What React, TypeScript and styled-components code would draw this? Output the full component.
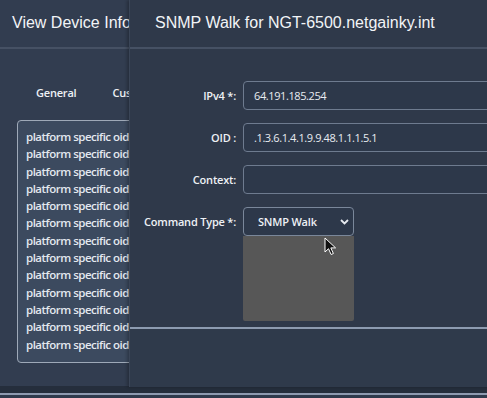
import styled, { createGlobalStyle } from "styled-components";

const GlobalStyle = createGlobalStyle`
  html, body {
    margin: 0;
    padding: 0;
    background: #2f3a4c;
    overflow: hidden;
  }
  #root {
    height: 398px;
  }
`;

const oidLines = Array.from({ length: 13 }, () => "platform specific oid");

const fields = [
  { label: "IPv4 *:", value: "64.191.185.254" },
  { label: "OID :", value: ".1.3.6.1.4.1.9.9.48.1.1.1.5.1" },
  { label: "Context:", value: "" },
];

export default function App() {
  return (
    <>
      <GlobalStyle />
      <Screen>
        <DeviceModal>
          <ModalHeader>
            <Title>View Device Info</Title>
          </ModalHeader>
          <Tabs>
            <Tab>General</Tab>
            <Tab>Custom</Tab>
          </Tabs>
          <OidBox>
            {oidLines.map((line, i) => (
              <OidLine key={i}>{line}</OidLine>
            ))}
          </OidBox>
        </DeviceModal>
        <BottomEdge />

        <WalkModal>
          <ModalHeader>
            <Title $front>SNMP Walk for NGT-6500.netgainky.int</Title>
          </ModalHeader>
          <Form>
            {fields.map((f) => (
              <FieldRow key={f.label}>
                <Label>{f.label}</Label>
                <Input>{f.value}</Input>
              </FieldRow>
            ))}
            <FieldRow>
              <Label>Command Type *:</Label>
              <SelectWrap>
                <Select>
                  <span>SNMP Walk</span>
                  <svg width="9" height="6" viewBox="0 0 9 6">
                    <path
                      d="M1 1l3.5 3.5L8 1"
                      stroke="#e6eaf0"
                      strokeWidth="1.8"
                      fill="none"
                    />
                  </svg>
                </Select>
                <DropList />
                <Cursor width="13" height="19" viewBox="0 0 13 19">
                  <path
                    d="M1 1v14l3.5-3.3 2.6 5.8 2.3-1-2.6-5.6H11.6z"
                    fill="#111"
                    stroke="#fff"
                    strokeWidth="1"
                  />
                </Cursor>
              </SelectWrap>
            </FieldRow>
          </Form>
          <Footer />
        </WalkModal>
      </Screen>
    </>
  );
}

const Screen = styled.div`
  position: relative;
  width: 487px;
  height: 398px;
  overflow: hidden;
  background: #2f3a4c;
  font-family: "Open Sans", "Liberation Sans", sans-serif;
`;

const DeviceModal = styled.div`
  height: 386px;
  background: #323d50;
  display: flex;
  flex-direction: column;
`;

const ModalHeader = styled.div`
  height: 47px;
  display: flex;
  align-items: center;
  border-bottom: 2px solid #465164;
  flex-shrink: 0;
`;

const Title = styled.h1<{ $front?: boolean }>`
  margin: 0;
  padding-left: ${(p) => (p.$front ? "25px" : "12px")};
  padding-bottom: 2px;
  font-family: "Liberation Sans", Arial, sans-serif;
  font-size: 16px;
  font-weight: 400;
  color: #f2f4f7;
  white-space: nowrap;
`;

const Tabs = styled.div`
  display: flex;
  gap: 36px;
  padding: 36px 0 0 36px;
  height: 35px;
`;

const Tab = styled.span`
  font-size: 11px;
  font-weight: 600;
  color: #eef1f5;
  letter-spacing: -0.2px;
`;

const OidBox = styled.div`
  margin: 0 0 0 17px;
  width: 150px;
  height: 243px;
  border: 1px solid #9ea9b8;
  border-radius: 4px;
  background: #3c4a5f;
  padding: 7px 0 0 8px;
  box-sizing: border-box;
  display: flex;
  flex-direction: column;
`;

const OidLine = styled.div`
  font-size: 11.5px;
  font-weight: 600;
  line-height: 17.3px;
  color: #e3e8ef;
  letter-spacing: -0.5px;
  white-space: nowrap;
`;

const BottomEdge = styled.div`
  height: 7px;
  background: #252e3c;
  border-bottom: 2px solid #8e9ab0;
`;

const WalkModal = styled.div`
  position: absolute;
  left: 129px;
  top: 0;
  width: 380px;
  height: 387px;
  background: #2f394a;
  box-shadow: -2px 0 3px rgba(0, 0, 0, 0.25);
  border-left: 1px solid #3a4557;
  display: flex;
  flex-direction: column;
`;

const Form = styled.div`
  display: flex;
  flex-direction: column;
  gap: 13px;
  padding-top: 32px;
  height: 246px;
  box-sizing: border-box;
  flex-shrink: 0;
`;

const FieldRow = styled.div`
  display: flex;
  align-items: center;
  gap: 7px;
  height: 29px;
`;

const Label = styled.label`
  width: 106px;
  text-align: right;
  font-size: 11px;
  font-weight: 600;
  color: #eef1f5;
  letter-spacing: -0.2px;
  white-space: nowrap;
`;

const Input = styled.div`
  flex: 1;
  height: 29px;
  box-sizing: border-box;
  border: 1px solid #6e7b8f;
  border-radius: 4px;
  background: #2d384a;
  padding: 0 10px;
  display: flex;
  align-items: center;
  font-size: 11px;
  font-weight: 500;
  color: #e8ecf1;
  letter-spacing: -0.4px;
`;

const SelectWrap = styled.div`
  position: relative;
  width: 111px;
`;

const Select = styled.div`
  height: 29px;
  box-sizing: border-box;
  border: 1px solid #7a879a;
  border-radius: 4px;
  background: #2d384a;
  display: flex;
  align-items: center;
  justify-content: space-between;
  padding: 0 4px 0 14px;
  font-size: 11px;
  font-weight: 600;
  color: #eef1f5;
  letter-spacing: -0.2px;
`;

const DropList = styled.div`
  position: absolute;
  top: 29px;
  left: 0;
  width: 111px;
  height: 85px;
  background: #575757;
  border-radius: 0 0 2px 2px;
  z-index: 2;
`;

const Cursor = styled.svg`
  position: absolute;
  left: 81px;
  top: 30px;
  z-index: 3;
`;

const Footer = styled.div`
  flex: 1;
  border-top: 2px solid #8d9bb0;
  margin-top: 32px;
  background: #2f3a4b;
`;
